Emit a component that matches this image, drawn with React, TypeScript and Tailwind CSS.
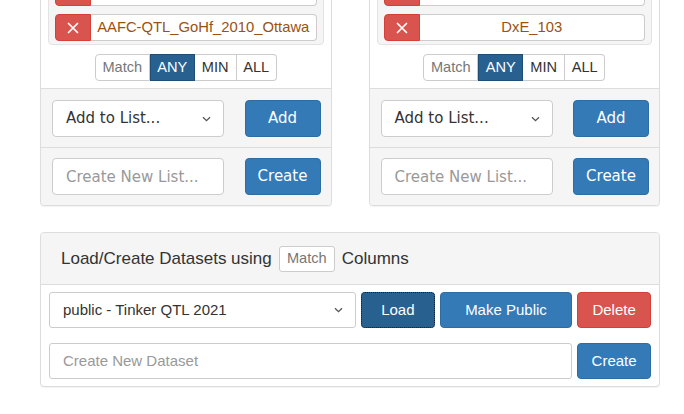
const Cross = () => (
  <svg width="12" height="12" viewBox="0 0 12 12">
    <path d="M1.5 1.5l9 9M10.5 1.5l-9 9" stroke="white" strokeWidth="1.7" strokeLinecap="round" />
  </svg>
);

const Chevron = () => (
  <svg width="9" height="6" viewBox="0 0 9 6">
    <path d="M1 1.2l3.5 3.5L8 1.2" fill="none" stroke="#555" strokeWidth="1.3" />
  </svg>
);

function Item({ label }: { label: string }) {
  return (
    <div className="flex h-[27px]">
      <div className="flex w-[36px] items-center justify-center rounded-l-[4px] border border-[#d43f3a] bg-[#d9534f]">
        <Cross />
      </div>
      <div className="flex flex-1 items-center justify-center rounded-r-[4px] border border-l-0 border-[#ccc] bg-white text-[14.8px] text-[#9a5212]">
        {label}
      </div>
    </div>
  );
}

function MatchGroup() {
  return (
    <div className="flex h-[27px] text-[14.6px]">
      <div className="flex w-[55px] items-center justify-center rounded-l-[4px] border border-[#ccc] bg-white text-[#777]">
        Match
      </div>
      <div className="flex w-[45px] items-center justify-center border border-[#204d74] bg-[#286090] text-white">
        ANY
      </div>
      <div className="flex w-[42px] items-center justify-center border border-l-0 border-[#ccc] bg-white text-[#333]">
        MIN
      </div>
      <div className="flex w-[40px] items-center justify-center rounded-r-[4px] border border-l-0 border-[#ccc] bg-white text-[#333]">
        ALL
      </div>
    </div>
  );
}

function ListCard({ items }: { items: string[] }) {
  return (
    <div className="rounded-[4px] border border-[#ddd] bg-white shadow-[0_1px_1px_rgba(0,0,0,0.05)]">
      <div className="px-[7px] pt-[8px] pb-[7px]">
        <div className="flex flex-col gap-[8px] rounded-[4px] border border-[#e3e3e3] bg-[#f5f5f5] px-[6px] pt-[7px] pb-[3px]">
          {items.map((it) => (
            <Item key={it} label={it} />
          ))}
        </div>
        <div className="mt-[9px] flex justify-center">
          <MatchGroup />
        </div>
      </div>
      <div className="rounded-b-[4px] border-t border-[#ddd] bg-[#f5f5f5] font-['DejaVu_Sans',sans-serif] text-[15px]">
        <div className="flex items-center justify-between border-b border-[#ddd] pt-[11px] pb-[10px] pr-[10px] pl-[11px]">
          <div className="flex h-[37px] w-[172px] items-center justify-between rounded-[4px] border border-[#ccc] bg-white pr-[12px] pl-[13px] text-[#333]">
            <span>Add to List...</span>
            <Chevron />
          </div>
          <button className="h-[37px] w-[76px] rounded-[4px] border border-[#2e6da4] bg-[#337ab7] text-white">
            Add
          </button>
        </div>
        <div className="flex items-center justify-between py-[10px] pr-[10px] pl-[11px]">
          <input
            placeholder="Create New List..."
            className="h-[37px] w-[172px] rounded-[4px] border border-[#ccc] bg-white px-[13px] text-[#333] placeholder:text-[#999] outline-none"
          />
          <button className="h-[37px] w-[76px] rounded-[4px] border border-[#2e6da4] bg-[#337ab7] text-white">
            Create
          </button>
        </div>
      </div>
    </div>
  );
}

export default function App() {
  return (
    <div className="h-[414px] overflow-hidden bg-white font-['Liberation_Sans',Arial,sans-serif] text-[#333]">
      <div className="-mt-[38px] ml-[40px] w-[620px]">
        <div className="grid grid-cols-2 gap-[37px]">
          <ListCard items={["AAFC-QTL_GoHf_2009_Morden", "AAFC-QTL_GoHf_2010_Ottawa"]} />
          <ListCard items={["DxE_102", "DxE_103"]} />
        </div>

        <div className="mt-[26px] rounded-[4px] border border-[#ddd] bg-white shadow-[0_1px_1px_rgba(0,0,0,0.05)]">
          <div className="flex h-[52px] items-center gap-[7px] rounded-t-[4px] border-b border-[#ddd] bg-[#f5f5f5] pl-[20px] text-[17px] text-[#333]">
            <span>Load/Create Datasets using</span>
            <span className="flex h-[26px] w-[56px] items-center justify-center rounded-[3px] border border-[#ccc] bg-white text-[14.6px] text-[#777]">
              Match
            </span>
            <span>Columns</span>
          </div>
          <div className="flex flex-col gap-[15px] px-[8px] pt-[7px] pb-[7px] text-[15px]">
            <div className="flex h-[36px] gap-[5px]">
              <div className="flex w-[308px] items-center justify-between rounded-[3px] border border-[#ccc] bg-white pr-[12px] pl-[13px] text-[#333]">
                <span>public - Tinker QTL 2021</span>
                <Chevron />
              </div>
              <button className="w-[74px] rounded-[4px] border border-dotted border-[#0b1a2a] bg-[#286090] text-white">
                Load
              </button>
              <button className="w-[133px] rounded-[4px] border border-[#2e6da4] bg-[#337ab7] text-white">
                Make Public
              </button>
              <button className="w-[74px] rounded-[4px] border border-[#d43f3a] bg-[#d9534f] text-white">
                Delete
              </button>
            </div>
            <div className="flex h-[36px] gap-[5px]">
              <input
                placeholder="Create New Dataset"
                className="w-[525px] rounded-[3px] border border-[#ccc] bg-white px-[13px] text-[#333] placeholder:text-[#999] outline-none"
              />
              <button className="w-[74px] rounded-[4px] border border-[#2e6da4] bg-[#337ab7] text-white">
                Create
              </button>
            </div>
          </div>
        </div>
      </div>
    </div>
  );
}
